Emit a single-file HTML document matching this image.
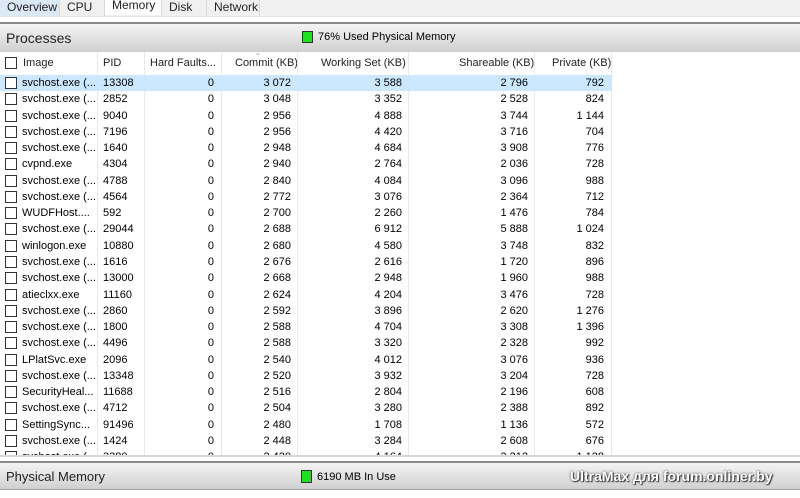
<!DOCTYPE html>
<html><head><meta charset="utf-8"><style>
*{margin:0;padding:0;box-sizing:border-box}
body{width:800px;height:498px;overflow:hidden;background:#fff;font-family:"Liberation Sans","DejaVu Sans",sans-serif;font-size:11px;color:#000;position:relative}
.a{position:absolute}
.tab{position:absolute;top:0;height:16px;line-height:14px;font-size:12px;padding-left:7px;border-right:1px solid #d9d9d9;background:#f0f0f0;color:#222}
.bar{position:absolute;left:0;width:800px;background:linear-gradient(#f4f4f4,#d0d0d0);border-top:2px solid #8a8a8a}
.sep{position:absolute;top:52px;bottom:43px;width:1px;background:#e8e8e8}
.row{position:absolute;left:0;width:612px;height:16.27px;line-height:16px;font-size:11px}
.row span{position:absolute;top:0;white-space:nowrap}
.cb{position:absolute;left:5px;top:2px;width:12px;height:12px;border:1px solid #333;background:#fff}
.r{text-align:right}
.hd{position:absolute;top:57px;font-size:11px;color:#222}
</style></head><body>
<div class="a" style="left:0;top:0;width:800px;height:16px;background:#f0f0f0"></div>
<div class="tab" style="left:0;width:60px;background:#dbe8f6">Overview</div>
<div class="tab" style="left:60px;width:45px">CPU</div>
<div class="tab" style="left:105px;width:57px;background:#fff;height:18px;top:-3px;line-height:16px;font-size:12px">Memory</div>
<div class="tab" style="left:162px;width:45px">Disk</div>
<div class="tab" style="left:207px;width:53px">Network</div>
<div class="a" style="left:0;top:16px;width:800px;height:7px;background:#fff;border-top:1px solid #e0e0e0"></div>
<div class="bar" style="top:22px;height:30px"><span class="a" style="left:6px;top:6px;font-size:14px;color:#222">Processes</span>
<span class="a" style="left:302px;top:7px;width:11px;height:12px;background:#1ee01e;border:1px solid #333"></span>
<span class="a" style="left:318px;top:7px;font-size:11px">76% Used Physical Memory</span></div>
<div class="a" style="left:0;top:52px;width:800px;height:22px;background:#fff"></div>
<div class="cb" style="top:57px"></div>
<div class="hd" style="left:23px">Image</div>
<div class="hd" style="left:103px">PID</div>
<div class="hd" style="left:150px">Hard Faults...</div>
<div class="hd" style="left:235px">Commit (KB)</div>
<div class="a" style="left:255px;top:49px;font-size:7px;color:#888">&#8964;</div>
<div class="hd" style="left:321px">Working Set (KB)</div>
<div class="hd" style="left:459px">Shareable (KB)</div>
<div class="hd" style="left:552px">Private (KB)</div>
<div class="sep" style="left:97px"></div><div class="sep" style="left:144px"></div><div class="sep" style="left:221px"></div><div class="sep" style="left:297px"></div><div class="sep" style="left:408px"></div><div class="sep" style="left:534px"></div><div class="sep" style="left:611px"></div>
<div id="rows"></div>
<div class="a" style="left:0;top:455px;width:800px;height:8px;background:#fff;border-top:2px solid #d8d8d8"></div>
<div class="bar" style="top:461px;height:29px;border-bottom:1px solid #a0a0a0"><span class="a" style="left:6px;top:6px;font-size:13px;color:#222">Physical Memory</span>
<span class="a" style="left:301px;top:7px;width:11px;height:13px;background:#1ee01e;border:1px solid #333"></span>
<span class="a" style="left:317px;top:8px;font-size:11px">6190 MB In Use</span>
<span class="a" style="left:570px;top:5px;font-size:14px;font-weight:bold;color:#fff;text-shadow:0 0 2px #333,1px 1px 1px #333">UltraMax для forum.onliner.by</span></div>
<script>
var d=[["svchost.exe (...","13308","3 072","3 588","2 796","792"],["svchost.exe (...","2852","3 048","3 352","2 528","824"],["svchost.exe (...","9040","2 956","4 888","3 744","1 144"],["svchost.exe (...","7196","2 956","4 420","3 716","704"],["svchost.exe (...","1640","2 948","4 684","3 908","776"],["cvpnd.exe","4304","2 940","2 764","2 036","728"],["svchost.exe (...","4788","2 840","4 084","3 096","988"],["svchost.exe (...","4564","2 772","3 076","2 364","712"],["WUDFHost....","592","2 700","2 260","1 476","784"],["svchost.exe (...","29044","2 688","6 912","5 888","1 024"],["winlogon.exe","10880","2 680","4 580","3 748","832"],["svchost.exe (...","1616","2 676","2 616","1 720","896"],["svchost.exe (...","13000","2 668","2 948","1 960","988"],["atieclxx.exe","11160","2 624","4 204","3 476","728"],["svchost.exe (...","2860","2 592","3 896","2 620","1 276"],["svchost.exe (...","1800","2 588","4 704","3 308","1 396"],["svchost.exe (...","4496","2 588","3 320","2 328","992"],["LPlatSvc.exe","2096","2 540","4 012","3 076","936"],["svchost.exe (...","13348","2 520","3 932","3 204","728"],["SecurityHeal...","11688","2 516","2 804","2 196","608"],["svchost.exe (...","4712","2 504","3 280","2 388","892"],["SettingSync...","91496","2 480","1 708","1 136","572"],["svchost.exe (...","1424","2 448","3 284","2 608","676"],["svchost.exe (...","3380","2 420","4 164","3 212","1 128"]];
var h="";d.forEach(function(r,i){var t=75+i*16.27;var h2=i==23?(455-t):16.27;
h+='<div class="row" style="top:'+t+'px;height:'+h2+'px;overflow:hidden;'+(i==0?'background:#cce8ff':'')+'"><div class="cb"></div><span style="left:22px">'+r[0]+'</span><span style="left:103px">'+r[1]+'</span><span class="r" style="right:398px">0</span><span class="r" style="right:321px">'+r[2]+'</span><span class="r" style="right:210px">'+r[3]+'</span><span class="r" style="right:84px">'+r[4]+'</span><span class="r" style="right:8px">'+r[5]+'</span></div>';});
document.getElementById("rows").innerHTML=h;
</script>
</body></html>
